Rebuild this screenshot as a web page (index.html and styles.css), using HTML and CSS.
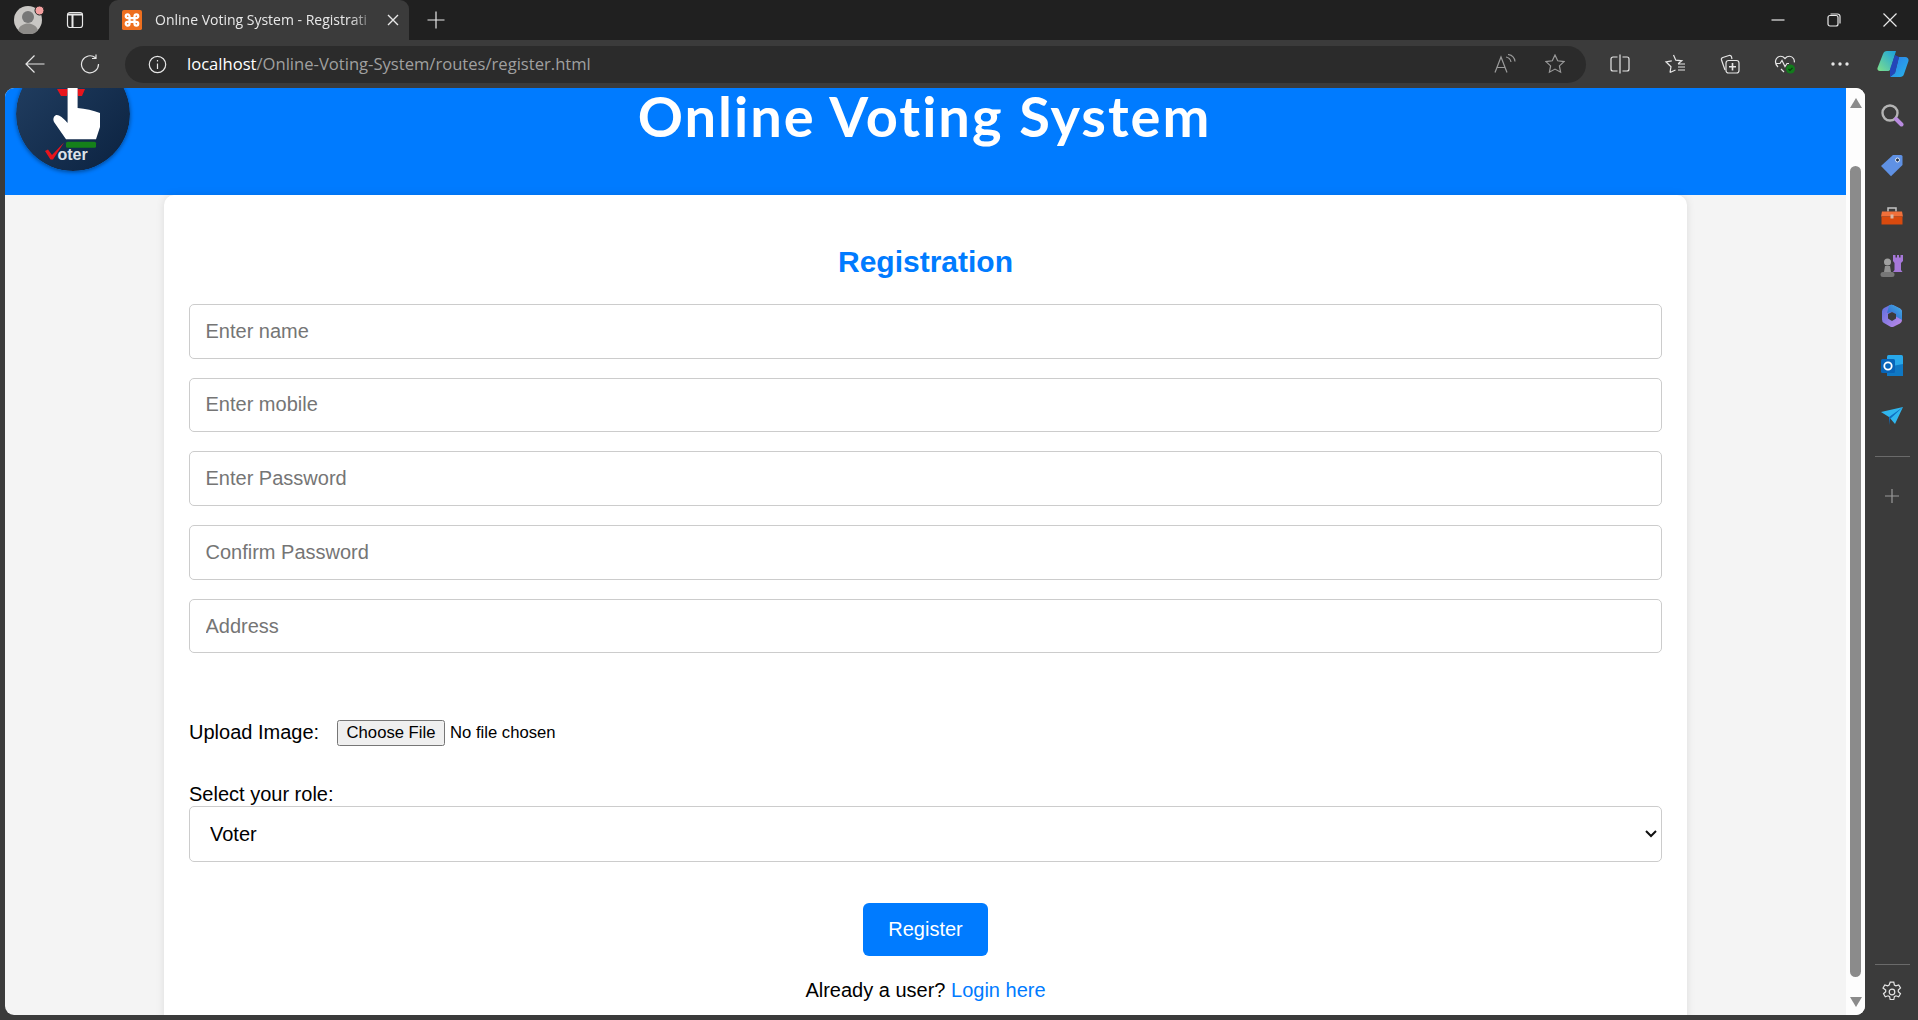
FILE: index.html
```html
<!DOCTYPE html>
<html lang="en">
<head>
    <meta charset="UTF-8">
    <title>Online Voting System - Registration</title>
    <link rel="stylesheet" href="styles.css">
</head>
<body>
    <!-- tab strip -->
    <div class="tabstrip">
        <div class="profile">
            <svg viewBox="0 0 32 28" width="32" height="28">
                <circle cx="14" cy="14" r="14" fill="#c9c7c4"/>
                <circle cx="14" cy="11" r="6" fill="#777"/>
                <path d="M4 24.5c1.5-5 6-7 10-7s8.5 2 10 7a14 14 0 0 1-20 0z" fill="#8d8b88"/>
                <circle cx="25.5" cy="4.5" r="4.5" fill="#f4a0a0" stroke="#202020"/>
            </svg>
        </div>
        <div class="strip-btn">
            <svg class="ico" viewBox="0 0 18 18" width="18" height="18"><rect x="1.5" y="1.5" width="15" height="15" rx="2.5"/><path d="M6.5 4v12.5M1.5 3.5h15" stroke-width="2"/></svg>
        </div>
        <div class="tab">
            <svg class="favicon" viewBox="0 0 16 16" width="20" height="20">
                <rect width="16" height="16" rx="1.5" fill="#ee6f1f"/>
                <path d="M6 6.5H4.5A1.5 1.5 0 1 1 6 5v1.5h4V5a1.5 1.5 0 1 1 1.5 1.5H10v3h1.5A1.5 1.5 0 1 1 10 11V9.5H6V11a1.5 1.5 0 1 1-1.5-1.5H6z" fill="none" stroke="#fff" stroke-width="1.8"/>
            </svg>
            <span class="tab-title">Online Voting System - Registrati</span>
            <svg class="ico tab-close" viewBox="0 0 12 12" width="12" height="12"><path d="M1 1l10 10M11 1L1 11" stroke-width="1.4"/></svg>
        </div>
        <div class="strip-btn new-tab">
            <svg class="ico" viewBox="0 0 18 18" width="18" height="18"><path d="M9 .5v17M.5 9h17"/></svg>
        </div>
        <div class="window-btns">
            <div class="win-btn"><svg class="ico" viewBox="0 0 14 14" width="14" height="14"><path d="M.5 7h13"/></svg></div>
            <div class="win-btn"><svg class="ico" viewBox="0 0 14 14" width="14" height="14"><rect x="1" y="2.5" width="10" height="10.5" rx="2"/><path d="M3.5 1h7A2.5 2.5 0 0 1 13 3.5v7"/></svg></div>
            <div class="win-btn"><svg class="ico" viewBox="0 0 14 14" width="14" height="14"><path d="M.5 .5l13 13M13.5 .5l-13 13"/></svg></div>
        </div>
    </div>

    <!-- toolbar -->
    <div class="toolbar">
        <div class="tool-btn">
            <svg class="ico" viewBox="0 0 20 20" width="20" height="20"><path d="M19.5 10H1M9.5 1.5L1 10l8.5 8.5"/></svg>
        </div>
        <div class="tool-btn">
            <svg class="ico" viewBox="0 0 20 20" width="20" height="20"><path d="M15.5 3.8A8.5 8.5 0 1 0 18.5 10M16 .5v4h-4"/></svg>
        </div>
        <div class="addressbar">
            <svg class="ico info" viewBox="0 0 19 19" width="19" height="19"><circle cx="9.5" cy="9.5" r="8.2"/><path d="M9.5 8.5V14M9.5 5v1.4"/></svg>
            <div class="url"><span class="host">localhost</span>/Online-Voting-System/routes/register.html</div>
            <div class="addr-btn dim">
                <svg class="ico" viewBox="0 0 22 20" width="22" height="20"><path d="M1 18.5L7 3l6 15.5M3 13.5h8M12 3c3 .5 4.5 2 5 5M14 .5c4 .5 6.5 3 7 7"/></svg>
            </div>
            <div class="addr-btn dim">
                <svg class="ico" viewBox="0 0 20 20" width="20" height="20"><path d="M10 1l2.7 5.8 6.3.8-4.6 4.3 1.2 6.3L10 15.1l-5.6 3.1 1.2-6.3L1 7.6l6.3-.8z"/></svg>
            </div>
        </div>
        <div class="tool-btn">
            <svg class="ico" viewBox="0 0 20 20" width="20" height="20"><path d="M7.5 3H3a2 2 0 0 0-2 2v10a2 2 0 0 0 2 2h4.5M12.5 3H17a2 2 0 0 1 2 2v10a2 2 0 0 1-2 2h-4.5M10 .5v19"/></svg>
        </div>
        <div class="tool-btn">
            <svg class="ico" viewBox="0 0 22 20" width="22" height="20"><path d="M9.5 1l2.3 5.2 6 .6-3.7 3M6 18.5l1-5.8-5-4.9 5.8-.9M6 18.5l5.5-2.5M14 10h7M14 13h7M14 16h7"/></svg>
        </div>
        <div class="tool-btn">
            <svg class="ico" viewBox="0 0 20 20" width="20" height="20"><path d="M5 16L1.5 6a2 2 0 0 1 1.3-2.5L9 1.5a2 2 0 0 1 2.500 1.300L12 5"/><rect x="6" y="6.5" width="13" height="12.5" rx="2.5"/><path d="M12.5 9v7.5M9 12.7h7" stroke-width="1.6"/></svg>
        </div>
        <div class="tool-btn">
            <svg viewBox="0 0 22 22" width="22" height="22">
                <path class="ico-line" d="M4 14C1.5 11.5 1 8 2.5 5.5 4.5 2.5 8.5 2.5 11 5.5c2.5-3 6.5-3 8.5 0 .7 1.2 1 2.5.8 3.8M2 10.5h4l2-3 3 6 2-3h2M7 16l3 3"/>
                <circle cx="16.5" cy="16" r="4.5" fill="#127c1c"/>
                <path d="M14.5 16l1.5 1.5 2.5-2.7" fill="none" stroke="#0a3d10" stroke-width="1.2"/>
            </svg>
        </div>
        <div class="tool-btn">
            <svg viewBox="0 0 20 20" width="20" height="20" fill="#e6e6e6"><circle cx="3" cy="10" r="1.7"/><circle cx="10" cy="10" r="1.7"/><circle cx="17" cy="10" r="1.7"/></svg>
        </div>
        <div class="copilot">
            <svg viewBox="0 0 32 28" width="32" height="28">
                <defs>
                    <linearGradient id="cop1" x1="0" y1="1" x2="1" y2="0"><stop offset="0" stop-color="#7fe08a"/><stop offset="1" stop-color="#18a0e0"/></linearGradient>
                    <linearGradient id="cop2" x1="0" y1="0" x2="1" y2="1"><stop offset="0" stop-color="#2c7bea"/><stop offset="1" stop-color="#28b5e8"/></linearGradient>
                </defs>
                <path d="M10 1h9l-5.5 18c-.5 1.5-1.5 2-3 2H3c-2 0-3-1.5-2.5-3L6 4c.7-2 2-3 4-3z" fill="url(#cop1)"/>
                <path d="M22 7h6c2.5 0 4 2 3.5 4L27 24c-.7 2.200-2 3-4 3H13l5-4 4-16z" fill="url(#cop2)"/>
                <path d="M13 19l5-14 4 2-4 16-5 4z" fill="#2148c8" opacity=".9"/>
            </svg>
        </div>
    </div>

    <div class="content-row">
        <div class="viewport">
            <div class="page">
                <header class="site-header">
                    <svg class="logo" viewBox="0 0 114 114" width="114" height="114">
                        <defs>
                            <linearGradient id="logoBg" x1="0" y1="0" x2="1" y2="1"><stop offset="0" stop-color="#234063"/><stop offset="1" stop-color="#0b2240"/></linearGradient>
                        </defs>
                        <circle cx="57" cy="57" r="57" fill="url(#logoBg)"/>
                        <path d="M41 32h11l-1 7h-6zM61 32h8l-3 7h-4z" fill="#e8141c"/>
                        <path d="M51.6 20h10v31q12 1 22.4 5v14l-4 12.3H50L38 65q-2-5 2-7 4-1 11.6 8z" fill="#fff"/>
                        <rect x="50" y="84.7" width="30" height="6" rx="1.5" fill="#15801a"/>
                        <text class="logo-text" x="41.5" y="102.5">oter</text>
                        <path d="M29 94l3-1.5 4 5.5 12-12.5-11 17h-2.5z" fill="#e8141c"/>
                    </svg>
                    <h1>Online Voting System</h1>
                </header>

                <main class="card">
                    <h2>Registration</h2>
                    <form>
                        <input class="field" type="text" placeholder="Enter name">
                        <input class="field" type="text" placeholder="Enter mobile">
                        <input class="field" type="password" placeholder="Enter Password">
                        <input class="field" type="password" placeholder="Confirm Password">
                        <input class="field" type="text" placeholder="Address">

                        <div class="upload-row">
                            <label for="photo">Upload Image:</label>
                            <input id="photo" type="file">
                        </div>

                        <label class="role-label" for="role">Select your role:</label>
                        <div class="select-wrap">
                            <select class="role-select" id="role">
                                <option>Voter</option>
                                <option>Group</option>
                            </select>
                            <svg class="chevron" viewBox="0 0 12 8" width="12" height="8"><path d="M1 1l5 5 5-5" fill="none" stroke="#111" stroke-width="2"/></svg>
                        </div>

                        <div class="submit-row">
                            <button class="btn" type="button">Register</button>
                        </div>
                    </form>
                    <p class="login-link">Already a user? <a href="#">Login here</a></p>
                </main>
            </div>

            <div class="scrollbar">
                <div class="arrow-up"></div>
                <div class="thumb"></div>
                <div class="arrow-down"></div>
            </div>
        </div>

        <!-- edge sidebar -->
        <aside class="sidebar">
            <div class="side-btn">
                <svg viewBox="0 0 24 24" width="24" height="24"><circle cx="10" cy="10" r="7.5" fill="none" stroke="#b4b4b4" stroke-width="2.4"/><path d="M16 16l5.5 5.5" stroke="#b98be0" stroke-width="4" stroke-linecap="round"/></svg>
            </div>
            <div class="side-btn">
                <svg viewBox="0 0 24 24" width="24" height="24"><path d="M13 2h8a1.5 1.5 0 0 1 1.5 1.5V12L11 23.3 1 13z" fill="#5f91e4"/><circle cx="17.5" cy="7" r="2" fill="#20304a" stroke="#dfe8f8"/></svg>
            </div>
            <div class="side-btn">
                <svg viewBox="0 -1.5 24 24" width="24" height="24"><path d="M8 7V3.5h8V7" fill="none" stroke="#c4c4c4" stroke-width="1.5"/><path d="M2 7h20l1 5H1z" fill="#f0703a"/><path d="M1.5 12h21v8h-21z" fill="#d94a0e"/><rect x="10.5" y="10" width="3" height="4" fill="#d8b9a8"/></svg>
            </div>
            <div class="side-btn">
                <svg viewBox="0 0 24 24" width="24" height="24"><path d="M13 1h2.5v2.5H17V1h2v2.5h1.5V1H23v6l-2 2v7l1.5 2H13l1.5-2V9L13 7z" fill="#a678d8"/><circle cx="7.5" cy="8" r="3.5" fill="#a0a0a0"/><path d="M5 12h5l1 6H4z" fill="#929292"/><rect x=".5" y="18" width="14" height="5" rx="2.5" fill="#777"/></svg>
            </div>
            <div class="side-btn">
                <svg viewBox="0 0 24 24" width="24" height="24">
                    <defs>
                        <linearGradient id="m1" x1="0" y1="0" x2="1" y2="1"><stop offset="0" stop-color="#5b6fe0"/><stop offset="1" stop-color="#c28ae8"/></linearGradient>
                        <linearGradient id="m2" x1="1" y1="0" x2="0" y2="1"><stop offset="0" stop-color="#3fb4e8"/><stop offset="1" stop-color="#3457c8"/></linearGradient>
                    </defs>
                    <path d="M9 1.5a4 4 0 0 1 4-.5l7 3.5a4 4 0 0 1 2 3.5v8a4 4 0 0 1-2 3.5l-6 3a4 4 0 0 1-4 0l-6-3.5a4 4 0 0 1-2-3.5V7.5a4 4 0 0 1 2-3.5z" fill="url(#m1)"/>
                    <path d="M9 1.5a4 4 0 0 1 4-.5l7 3.5a4 4 0 0 1 2 3.5v8l-6-3.5V10l-4-2-5 1z" fill="url(#m2)"/>
                    <path d="M8 10l4-2 4 2v4.5l-4 2.5-4-2.5z" fill="#3b3b3b"/>
                </svg>
            </div>
            <div class="side-btn">
                <svg viewBox="0 0 24 24" width="24" height="24"><rect x="7" y="1" width="16" height="21" rx="1.5" fill="#28a8ea"/><path d="M7 13l16-3v12H7z" fill="#0f78c4"/><rect x="1" y="5" width="14" height="14" rx="1.5" fill="#0864b8"/><circle cx="8" cy="12" r="3.7" fill="none" stroke="#fff" stroke-width="1.8"/></svg>
            </div>
            <div class="side-btn">
                <svg viewBox="0 0 24 24" width="24" height="24"><path d="M1 8l22-5-8 17-6-7z" fill="#30b6ee"/><path d="M9 13l14-10-13 12-1 6z" fill="#0f6fc0"/></svg>
            </div>
            <div class="side-sep"></div>
            <div class="side-btn dim">
                <svg class="ico" viewBox="0 0 16 16" width="16" height="16"><path d="M8 1v14M1 8h14"/></svg>
            </div>
            <div class="side-sep bottom"></div>
            <div class="side-btn">
                <svg class="ico" viewBox="0 0 22 22" width="22" height="22"><circle cx="11" cy="11" r="2.8"/><path d="M9.2 1.2h3.6l.6 2.9 1.5.8 2.8-1 1.800 3.100-2.200 2v1.700l2.200 2-1.800 3.100-2.800-1-1.500.8-.6 2.900H9.200l-.6-2.900-1.500-.8-2.800 1-1.800-3.100 2.200-2V9L2 7l1.800-3.100 2.800 1 1.500-.8z"/></svg>
            </div>
        </aside>
    </div>
</body>
</html>
```

FILE: styles.css
```css
* {
    box-sizing: border-box;
}
html, body {
    margin: 0;
    height: 100%;
    overflow: hidden;
}
body {
    display: flex;
    flex-direction: column;
    background-color: #3b3b3b;
    font-family: "Liberation Sans", Arial, sans-serif;
}
.ico {
    fill: none;
    stroke: currentColor;
    stroke-width: 1.2;
}
.ico-line {
    fill: none;
    stroke: #e6e6e6;
    stroke-width: 1.2;
}

/* tab strip */
.tabstrip {
    display: flex;
    align-items: center;
    height: 40px;
    flex-shrink: 0;
    background-color: #202020;
    color: #e8e8e8;
}
.profile {
    width: 56px;
    padding-left: 14px;
    display: flex;
}
.strip-btn {
    width: 38px;
    display: flex;
    justify-content: center;
}
.tab {
    display: flex;
    align-items: center;
    width: 299.5px;
    height: 40px;
    margin-left: 15px;
    padding-left: 13px;
    background-color: #3b3b3b;
    border-radius: 9px 9px 0 0;
}
.favicon {
    flex-shrink: 0;
}
.tab-title {
    width: 222px;
    margin-left: 13px;
    padding-bottom: 2px;
    overflow: hidden;
    white-space: nowrap;
    font-family: "Open Sans", sans-serif;
    font-size: 14px;
    -webkit-mask-image: linear-gradient(to right, #000 88%, transparent);
    mask-image: linear-gradient(to right, #000 88%, transparent);
}
.tab-close {
    margin-left: 10px;
}
.new-tab {
    margin-left: 8px;
}
.window-btns {
    display: flex;
    margin-left: auto;
}
.win-btn {
    width: 56px;
    display: flex;
    justify-content: center;
}

/* toolbar */
.toolbar {
    display: flex;
    align-items: center;
    height: 48px;
    flex-shrink: 0;
    padding-left: 7px;
    color: #e6e6e6;
}
.tool-btn {
    width: 55px;
    display: flex;
    justify-content: center;
}
.addressbar {
    flex: 1;
    display: flex;
    align-items: center;
    height: 37px;
    margin: 0 6.5px 0 8px;
    padding: 0 6px 0 23px;
    background-color: #2b2b2b;
    border-radius: 19px;
}
.info {
    flex-shrink: 0;
}
.url {
    flex: 1;
    margin-left: 20px;
    padding-bottom: 2px;
    font-family: "Open Sans", sans-serif;
    font-size: 16.6px;
    color: #a0a0a0;
    white-space: nowrap;
}
.host {
    color: #fff;
}
.addr-btn {
    width: 50px;
    display: flex;
    justify-content: center;
}
.dim {
    color: #9a9a9a;
}
.copilot {
    width: 51px;
    display: flex;
    justify-content: center;
}

/* layout below the browser bars */
.content-row {
    flex: 1;
    display: flex;
    min-height: 0;
}
.viewport {
    flex: 1;
    display: flex;
    margin: 0 0 5px 5px;
    overflow: hidden;
    border-radius: 9px;
    background-color: #f4f4f4;
}
.page {
    flex: 1;
    min-width: 0;
    overflow: hidden;
}
.scrollbar {
    width: 19px;
    display: flex;
    flex-direction: column;
    align-items: center;
    background-color: #fdfdfd;
    padding: 10px 0 8px;
}
.arrow-up, .arrow-down {
    width: 0;
    height: 0;
    border-left: 6.5px solid transparent;
    border-right: 6.5px solid transparent;
}
.arrow-up {
    border-bottom: 10px solid #8b8b8b;
}
.arrow-down {
    border-top: 10px solid #8b8b8b;
}
.thumb {
    width: 11px;
    flex: 1;
    margin: 58px 0 20px;
    background-color: #8b8b8b;
    border-radius: 6px;
}

/* edge sidebar */
.sidebar {
    width: 53px;
    flex-shrink: 0;
    display: flex;
    flex-direction: column;
    padding: 2px 0 3px;
    color: #e6e6e6;
}
.side-btn {
    height: 50.2px;
    flex-shrink: 0;
    display: flex;
    align-items: center;
    justify-content: center;
}
.side-sep {
    height: 1px;
    flex-shrink: 0;
    margin: 15px 8px 14px 10px;
    background-color: #6a6a6a;
}
.side-sep.bottom {
    margin-top: auto;
    margin-bottom: 2px;
}

/* the page itself */
.site-header {
    display: flex;
    align-items: flex-start;
    height: 107px;
    padding-left: 11.2px;
    background-color: #007bff;
}
.logo {
    flex-shrink: 0;
    margin-top: -31.5px;
    border-radius: 50%;
    box-shadow: 0 1px 4px rgba(0, 0, 0, 0.45);
}
.logo-text {
    font-family: "Liberation Sans", Arial, sans-serif;
    font-size: 16px;
    font-weight: 700;
    fill: #dde2e8;
}
.site-header h1 {
    flex: 1;
    margin: 0 127px 0 0;
    text-align: center;
    font-family: "Comic Sans MS", "Lato", sans-serif;
    font-size: 56px;
    line-height: 1;
    font-weight: 700;
    letter-spacing: 2px;
    color: #fff;
}
.card {
    width: 1523px;
    margin: 0 auto;
    padding: 49px 25px 40px;
    background-color: #fff;
    border-radius: 10px;
    box-shadow: 0 0 8px rgba(0, 0, 0, 0.1);
}
.card h2 {
    margin: 0 0 25px;
    text-align: center;
    font-size: 30px;
    line-height: 35px;
    color: #007bff;
}
.field {
    display: block;
    width: 100%;
    height: 54.5px;
    margin-bottom: 19.2px;
    padding: 0 15.5px;
    border: 1px solid #ccc;
    border-radius: 5px;
    font-family: inherit;
    font-size: 20px;
}
.field::placeholder {
    color: #757575;
}
.upload-row {
    display: flex;
    align-items: center;
    margin-top: 66px;
    font-size: 20px;
    height: 26px;
}
.upload-row label {
    margin-right: 18px;
}
#photo {
    margin-top: 2px;
    font-family: inherit;
    font-size: 16.67px;
}
#photo::file-selector-button {
    padding: 1px 8.5px;
    margin-right: 5px;
    height: 26px;
    background-color: #efefef;
    border: 1px solid #767676;
    border-radius: 2.5px;
}
.role-label {
    display: block;
    margin-top: 38px;
    font-size: 20px;
    line-height: 23px;
}
.select-wrap {
    position: relative;
}
.role-select {
    display: block;
    width: 100%;
    height: 56px;
    padding: 0 20px;
    appearance: none;
    background-color: #fff;
    border: 1px solid #ccc;
    border-radius: 5px;
    font-family: inherit;
    font-size: 20px;
    color: #000;
}
.chevron {
    position: absolute;
    right: 5px;
    top: 24px;
    pointer-events: none;
}
.submit-row {
    display: flex;
    justify-content: center;
    margin-top: 41px;
}
.btn {
    width: 125px;
    height: 53px;
    background-color: #007bff;
    color: white;
    border: none;
    border-radius: 6px;
    font-family: inherit;
    font-size: 20px;
    cursor: pointer;
}
.login-link {
    margin: 23px 0 0;
    text-align: center;
    font-size: 20px;
    line-height: 23px;
    color: #000;
}
.login-link a {
    color: #007bff;
    text-decoration: none;
}
```
